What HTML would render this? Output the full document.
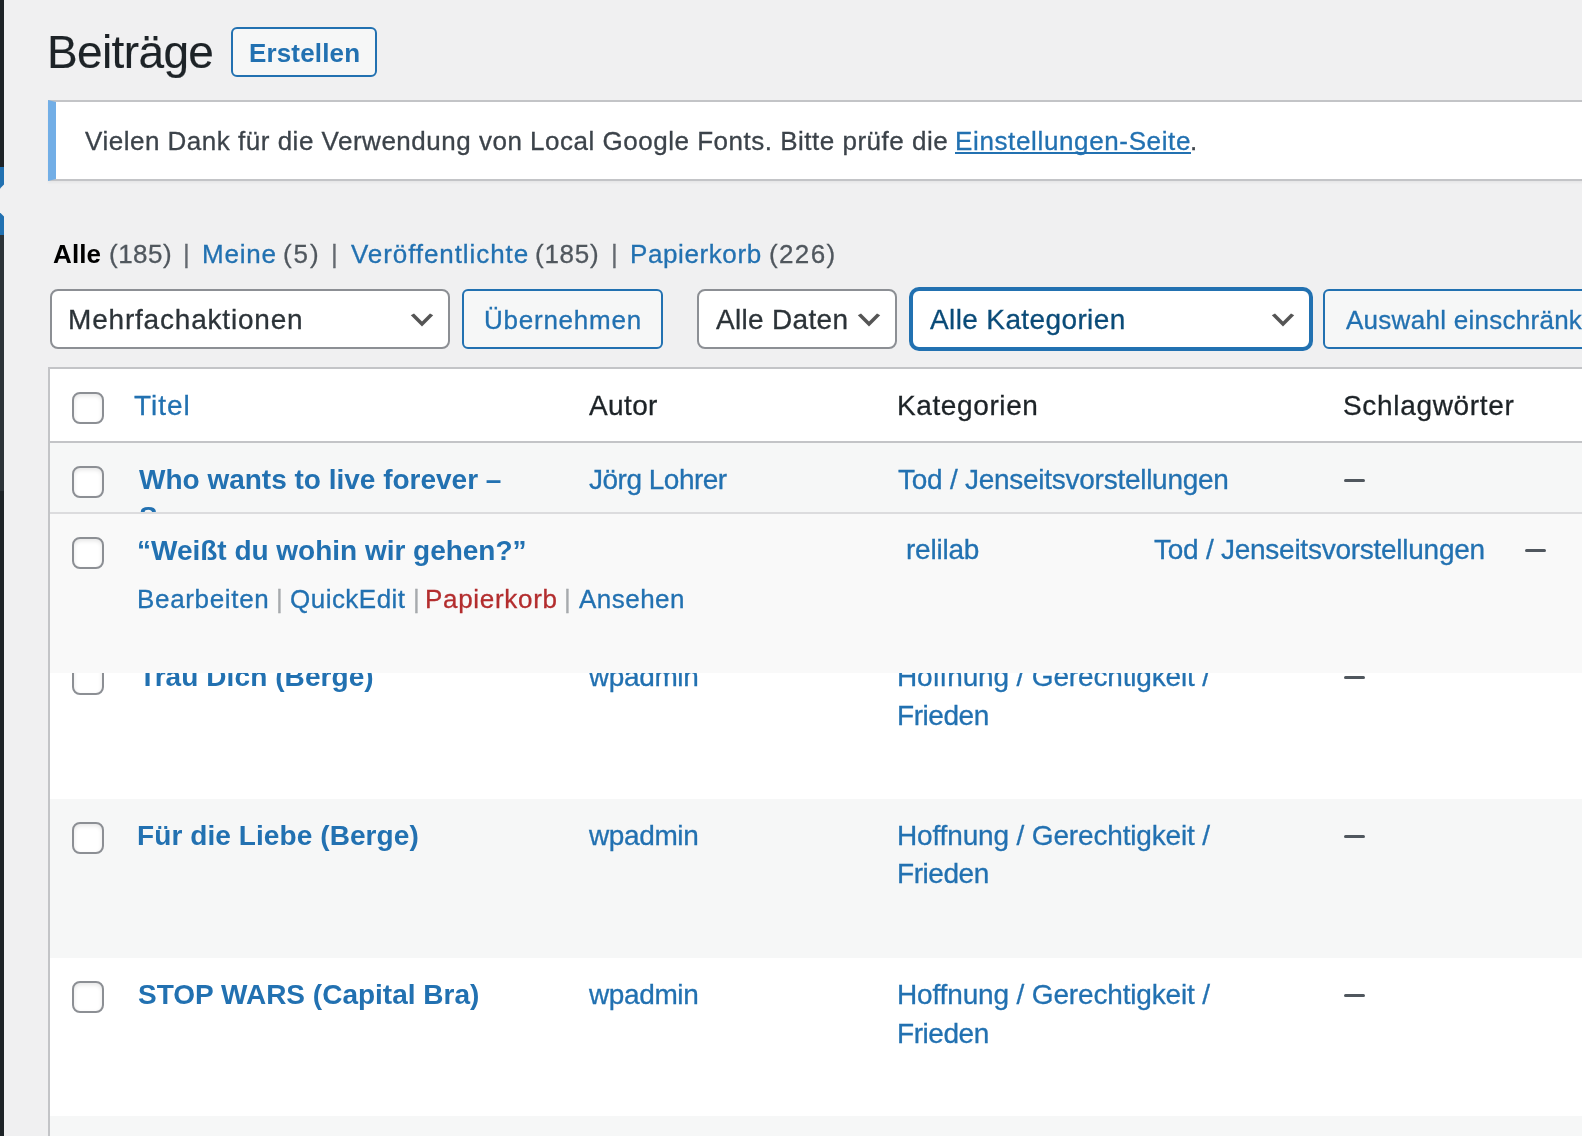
<!DOCTYPE html>
<html><head><meta charset="utf-8">
<style>
*{box-sizing:border-box;margin:0;padding:0}
html,body{width:1582px;height:1136px;overflow:hidden;background:#f0f0f1;font-family:"Liberation Sans",sans-serif;position:relative}
.a{position:absolute}
.t{position:absolute;white-space:pre;line-height:1;will-change:transform}
.cb{position:absolute;width:32px;height:32px;border:2px solid #8c8f94;border-radius:8px;background:#fff;box-shadow:inset 0 2px 4px rgba(0,0,0,.1)}
.btn{position:absolute;border:2px solid #2271b1;border-radius:6px;background:#f6f7f7}
.sel{position:absolute;border:2px solid #8c8f94;border-radius:8px;background:#fff}
.dash{position:absolute;width:21px;height:3px;background:#50575e;border-radius:1.5px}
.chev{position:absolute;width:32px;height:32px}
.r{-webkit-text-stroke:0.3px currentColor}
</style></head><body>

<!-- sidebar strip -->
<div class="a" style="left:0;top:0;width:4px;height:167px;background:#1d2327"></div>
<div class="a" style="left:0;top:167px;width:4px;height:68px;background:#2271b1"></div>
<div class="a" style="left:0;top:235px;width:4px;height:256px;background:#2c3338"></div>
<div class="a" style="left:0;top:491px;width:4px;height:645px;background:#1d2327"></div>
<svg class="a" style="left:0;top:180px" width="4" height="42" viewBox="0 180 4 42"><polygon points="4,184.5 4,216.5 -12,200.5" fill="#f0f0f1"/></svg>

<div class="btn" style="left:231px;top:27px;width:146px;height:50px"></div>

<div class="a" style="left:48px;top:100px;width:1600px;height:81px;background:#fff;border:2px solid #c3c4c7;border-left:8px solid #72aee6;box-shadow:0 2px 2px rgba(0,0,0,.04)"></div>
<div class="a" style="left:955px;top:152px;width:236px;height:2px;background:#2271b1"></div>

<div class="sel" style="left:50px;top:289px;width:400px;height:60px"></div>
<svg class="chev" style="left:406.2px;top:304.2px" viewBox="0 0 20 20"><path d="M5 6l5 5 5-5 2 1-7 7-7-7 2-1z" fill="#555"/></svg>
<div class="btn" style="left:462px;top:289px;width:201px;height:60px"></div>
<div class="sel" style="left:697px;top:289px;width:200px;height:60px"></div>
<svg class="chev" style="left:853.4px;top:304.2px" viewBox="0 0 20 20"><path d="M5 6l5 5 5-5 2 1-7 7-7-7 2-1z" fill="#555"/></svg>
<div class="sel" style="left:911px;top:289px;width:400px;height:60px;border-color:#2271b1;box-shadow:0 0 0 2px #2271b1"></div>
<svg class="chev" style="left:1267.4px;top:304.2px" viewBox="0 0 20 20"><path d="M5 6l5 5 5-5 2 1-7 7-7-7 2-1z" fill="#555"/></svg>
<div class="btn" style="left:1323px;top:289px;width:400px;height:60px"></div>

<div class="a" style="left:48px;top:367px;width:1600px;height:800px;background:#fff;border:2px solid #c3c4c7"></div>
<div class="a" style="left:50px;top:441px;width:1600px;height:2px;background:#c3c4c7"></div>
<div class="cb" style="left:72px;top:392px"></div>

<div class="a" style="left:50px;top:443px;width:1600px;height:196px;background:#f6f7f7"></div>
<div class="cb" style="left:72px;top:466px"></div>
<div class="dash" style="left:1344px;top:479px"></div>

<div class="cb" style="left:72px;top:663px"></div>
<div class="dash" style="left:1344px;top:676px"></div>

<div class="a" style="left:50px;top:799px;width:1600px;height:159px;background:#f6f7f7"></div>
<div class="cb" style="left:72px;top:822px"></div>
<div class="dash" style="left:1344px;top:835px"></div>

<div class="cb" style="left:72px;top:981px"></div>
<div class="dash" style="left:1344px;top:994px"></div>

<div class="a" style="left:50px;top:1116px;width:1600px;height:40px;background:#f6f7f7"></div>

<div class="t r" style="left:47.0px;top:29.0px;font-size:46px;font-weight:400;color:#1d2327;letter-spacing:-0.629px;-webkit-text-stroke:0.15px currentColor">Beiträge</div>
<div class="t" style="left:248.8px;top:40.0px;font-size:26px;font-weight:700;color:#2271b1;letter-spacing:0.15px;">Erstellen</div>
<div class="t r" style="left:85.0px;top:128.0px;font-size:26px;font-weight:400;color:#3c434a;letter-spacing:0.507px;">Vielen Dank für die Verwendung von Local Google Fonts. Bitte prüfe die</div>
<div class="t r" style="left:955.1px;top:128.0px;font-size:26px;font-weight:400;color:#2271b1;letter-spacing:0.633px;">Einstellungen-Seite</div>
<div class="t r" style="left:1190.2px;top:128.0px;font-size:26px;font-weight:400;color:#3c434a;letter-spacing:0px;">.</div>
<div class="t" style="left:52.8px;top:241.0px;font-size:26px;font-weight:700;color:#000;letter-spacing:0.1px;">Alle</div>
<div class="t r" style="left:108.5px;top:241.0px;font-size:26px;font-weight:400;color:#50575e;letter-spacing:0.475px;">(185)</div>
<div class="t r" style="left:183.2px;top:241.0px;font-size:26px;font-weight:400;color:#646970;letter-spacing:0px;">|</div>
<div class="t r" style="left:201.8px;top:241.0px;font-size:26px;font-weight:400;color:#2271b1;letter-spacing:0.8px;">Meine</div>
<div class="t r" style="left:283.0px;top:241.0px;font-size:26px;font-weight:400;color:#50575e;letter-spacing:1.9px;">(5)</div>
<div class="t r" style="left:330.5px;top:241.0px;font-size:26px;font-weight:400;color:#646970;letter-spacing:0px;">|</div>
<div class="t r" style="left:351.4px;top:241.0px;font-size:26px;font-weight:400;color:#2271b1;letter-spacing:0.914px;">Veröffentlichte</div>
<div class="t r" style="left:535.3px;top:241.0px;font-size:26px;font-weight:400;color:#50575e;letter-spacing:0.75px;">(185)</div>
<div class="t r" style="left:611.0px;top:241.0px;font-size:26px;font-weight:400;color:#646970;letter-spacing:0px;">|</div>
<div class="t r" style="left:630.2px;top:241.0px;font-size:26px;font-weight:400;color:#2271b1;letter-spacing:0.6px;">Papierkorb</div>
<div class="t r" style="left:768.7px;top:241.0px;font-size:26px;font-weight:400;color:#50575e;letter-spacing:1.375px;">(226)</div>
<div class="t r" style="left:67.65px;top:306.0px;font-size:28px;font-weight:400;color:#2c3338;letter-spacing:0.803px;">Mehrfachaktionen</div>
<div class="t r" style="left:483.6px;top:307.0px;font-size:26px;font-weight:400;color:#2271b1;letter-spacing:0.756px;">Übernehmen</div>
<div class="t r" style="left:715.6px;top:306.0px;font-size:28px;font-weight:400;color:#2c3338;letter-spacing:0.322px;">Alle Daten</div>
<div class="t r" style="left:929.5px;top:306.0px;font-size:28px;font-weight:400;color:#0a4b78;letter-spacing:0.379px;">Alle Kategorien</div>
<div class="t r" style="left:1346.2px;top:307.0px;font-size:26px;font-weight:400;color:#2271b1;letter-spacing:0.273px;">Auswahl einschränken</div>
<div class="t r" style="left:133.8px;top:392.0px;font-size:28px;font-weight:400;color:#2271b1;letter-spacing:0.975px;">Titel</div>
<div class="t r" style="left:589.0px;top:392.0px;font-size:28px;font-weight:400;color:#1d2327;letter-spacing:0.375px;">Autor</div>
<div class="t r" style="left:897.3px;top:392.0px;font-size:28px;font-weight:400;color:#1d2327;letter-spacing:0.611px;">Kategorien</div>
<div class="t r" style="left:1343.0px;top:392.0px;font-size:28px;font-weight:400;color:#1d2327;letter-spacing:0.673px;">Schlagwörter</div>
<div class="t" style="left:139.0px;top:465.5px;font-size:28px;font-weight:700;color:#2271b1;letter-spacing:-0.004px;">Who wants to live forever –</div>
<div class="t" style="left:139.2px;top:503.0px;font-size:28px;font-weight:700;color:#2271b1;letter-spacing:0px;">S</div>
<div class="t r" style="left:588.6px;top:465.5px;font-size:28px;font-weight:400;color:#2271b1;letter-spacing:-0.5px;">Jörg Lohrer</div>
<div class="t r" style="left:898.3px;top:465.5px;font-size:28px;font-weight:400;color:#2271b1;letter-spacing:-0.262px;">Tod / Jenseitsvorstellungen</div>
<div class="t" style="left:139.0px;top:663.0px;font-size:28px;font-weight:700;color:#2271b1;letter-spacing:0.081px;">Trau Dich (Berge)</div>
<div class="t r" style="left:588.6px;top:663.0px;font-size:28px;font-weight:400;color:#2271b1;letter-spacing:-0.383px;">wpadmin</div>
<div class="t r" style="left:897.3px;top:663.0px;font-size:28px;font-weight:400;color:#2271b1;letter-spacing:-0.156px;">Hoffnung / Gerechtigkeit /</div>
<div class="t r" style="left:897.3px;top:702.0px;font-size:28px;font-weight:400;color:#2271b1;letter-spacing:-0.45px;">Frieden</div>
<div class="t" style="left:137.1px;top:821.8px;font-size:28px;font-weight:700;color:#2271b1;letter-spacing:0.085px;">Für die Liebe (Berge)</div>
<div class="t r" style="left:588.6px;top:821.5px;font-size:28px;font-weight:400;color:#2271b1;letter-spacing:-0.383px;">wpadmin</div>
<div class="t r" style="left:897.3px;top:821.5px;font-size:28px;font-weight:400;color:#2271b1;letter-spacing:-0.156px;">Hoffnung / Gerechtigkeit /</div>
<div class="t r" style="left:897.3px;top:860.3px;font-size:28px;font-weight:400;color:#2271b1;letter-spacing:-0.45px;">Frieden</div>
<div class="t" style="left:137.7px;top:981.0px;font-size:28px;font-weight:700;color:#2271b1;letter-spacing:0.005px;">STOP WARS (Capital Bra)</div>
<div class="t r" style="left:588.6px;top:980.5px;font-size:28px;font-weight:400;color:#2271b1;letter-spacing:-0.383px;">wpadmin</div>
<div class="t r" style="left:897.3px;top:980.5px;font-size:28px;font-weight:400;color:#2271b1;letter-spacing:-0.156px;">Hoffnung / Gerechtigkeit /</div>
<div class="t r" style="left:897.3px;top:1019.5px;font-size:28px;font-weight:400;color:#2271b1;letter-spacing:-0.45px;">Frieden</div>

<div class="a" style="left:50px;top:512px;width:1600px;height:161px;background:#f9f9f9;border-top:2px solid #dcdcde"></div>
<div class="cb" style="left:72px;top:537px"></div>
<div class="dash" style="left:1525px;top:549px"></div>

<div class="t" style="left:137.0px;top:537.0px;font-size:28px;font-weight:700;color:#2271b1;letter-spacing:-0.015px;">“Weißt du wohin wir gehen?”</div>
<div class="t r" style="left:137.0px;top:585.5px;font-size:26px;font-weight:400;color:#2271b1;letter-spacing:0.667px;">Bearbeiten</div>
<div class="t r" style="left:275.5px;top:585.5px;font-size:26px;font-weight:400;color:#a7aaad;letter-spacing:0px;">|</div>
<div class="t r" style="left:289.7px;top:585.5px;font-size:26px;font-weight:400;color:#2271b1;letter-spacing:0.475px;">QuickEdit</div>
<div class="t r" style="left:413.0px;top:585.5px;font-size:26px;font-weight:400;color:#a7aaad;letter-spacing:0px;">|</div>
<div class="t r" style="left:425.2px;top:585.5px;font-size:26px;font-weight:400;color:#b32d2e;letter-spacing:0.689px;">Papierkorb</div>
<div class="t r" style="left:564.3px;top:585.5px;font-size:26px;font-weight:400;color:#a7aaad;letter-spacing:0px;">|</div>
<div class="t r" style="left:579.0px;top:585.5px;font-size:26px;font-weight:400;color:#2271b1;letter-spacing:0.467px;">Ansehen</div>
<div class="t r" style="left:905.7px;top:536.0px;font-size:28px;font-weight:400;color:#2271b1;letter-spacing:-0.233px;">relilab</div>
<div class="t r" style="left:1153.6px;top:535.7px;font-size:28px;font-weight:400;color:#2271b1;letter-spacing:-0.254px;">Tod / Jenseitsvorstellungen</div>
</body></html>
